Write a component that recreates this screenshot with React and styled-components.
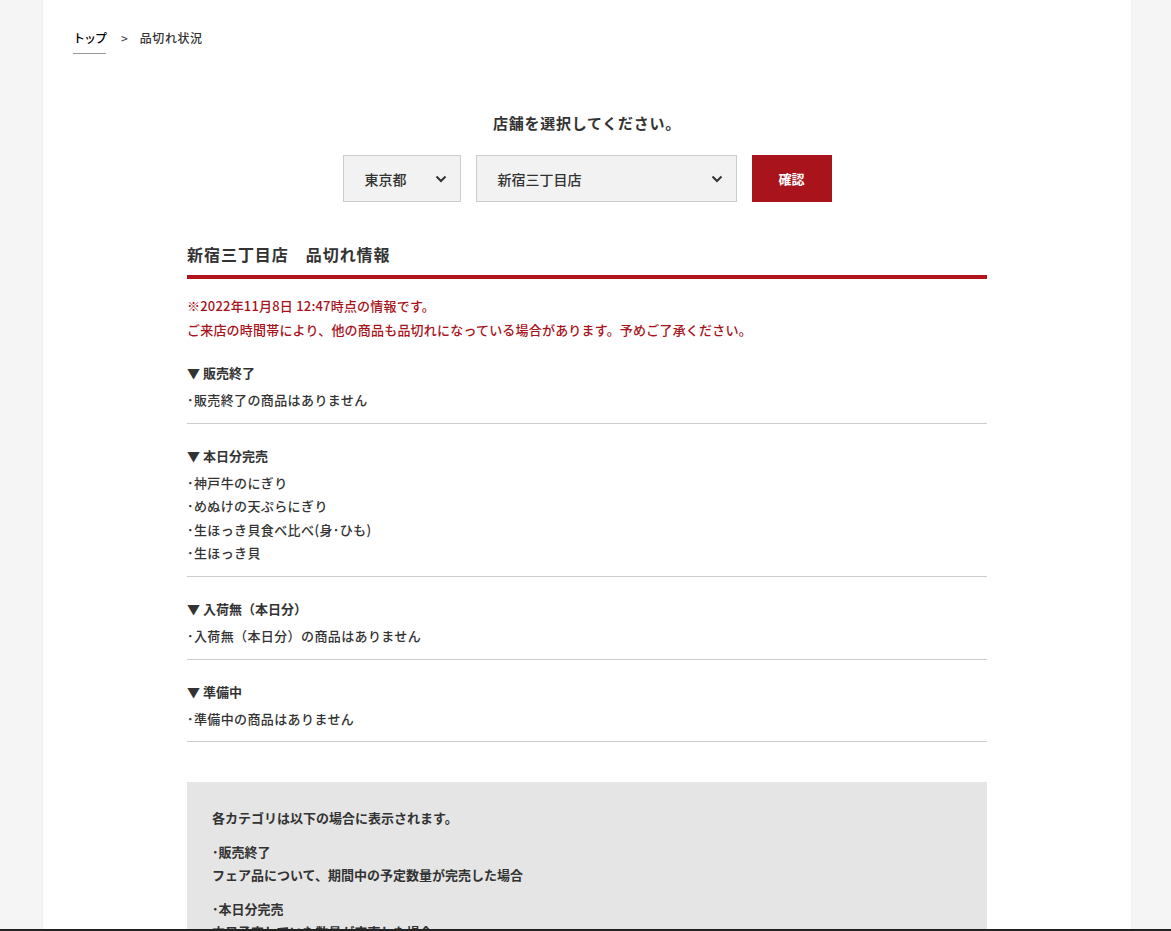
import React from 'react';
import styled, { createGlobalStyle } from 'styled-components';

const GlobalStyle = createGlobalStyle`
    html, body {
        margin: 0;
        padding: 0;
        background: #f5f5f5;
        font-family: "Noto Sans CJK JP", "Noto Sans", sans-serif;
        color: #333;
    }
    * { box-sizing: border-box; }
`;

const Page = styled.div`
    padding: 0 40px 0 43px;
`;

const Container = styled.div`
    background: #fff;
    min-height: 1200px;
    padding: 28px 30px 80px;
    box-shadow: 0 0 3px rgba(0,0,0,0.06);
`;

const Breadcrumb = styled.nav`
    display: flex;
    align-items: flex-start;
    font-size: 12px;
    line-height: 20px;
`;

const Crumb = styled.a`
    color: ${p => (p.$current ? '#333' : '#000')};
    font-weight: 500;
    letter-spacing: ${p => (p.$current ? '0.05em' : '-1px')};
    text-decoration: none;
    padding-bottom: 5px;
    border-bottom: ${p => (p.$current ? 'none' : '1px solid #999')};
`;

const Sep = styled.span`
    margin: 0 12px 0 15px;
    color: #333;
`;

const Inner = styled.div`
    width: 800px;
    margin: 0 auto;
`;

const SelectTitle = styled.h2`
    margin: 57px 0 20px;
    text-align: center;
    font-size: 15px;
    line-height: 24px;
    letter-spacing: 0.05em;
    font-weight: 700;
    color: #333;
`;

const SelectRow = styled.div`
    display: flex;
    justify-content: center;
    gap: 15px;
`;

const SelectBox = styled.div`
    width: ${p => p.$w}px;
    height: 47px;
    display: flex;
    align-items: center;
    justify-content: space-between;
    padding: 0 13px 0 21px;
    background: #f2f2f2;
    border: 1px solid #ccc;
    font-size: 14px;
    font-weight: 500;
    color: #333;
`;

const Button = styled.button`
    width: 80px;
    height: 47px;
    border: none;
    background: #a9141c;
    color: #fff;
    font-family: inherit;
    font-size: 13px;
    font-weight: 700;
`;

const StoreTitle = styled.h3`
    margin: 40px 0 0;
    padding-bottom: 9px;
    border-bottom: 4px solid #b0141c;
    font-size: 16px;
    line-height: 24px;
    letter-spacing: 0.06em;
    font-weight: 700;
    color: #333;
`;

const Notice = styled.p`
    margin: 15px 0 -1px;
    font-size: 13px;
    line-height: 24px;
    letter-spacing: 0.2px;
    font-weight: 500;
    color: #a8121b;
`;

const Section = styled.section`
    padding: 20px 0 11px;
    border-bottom: 1px solid #ccc;
`;

const SectionHead = styled.h4`
    margin: 0 0 3px;
    font-size: 13px;
    line-height: 24px;
    font-weight: 700;
    color: #333;
`;

const Items = styled.ul`
    margin: 0;
    padding: 0;
    list-style: none;
`;

const Item = styled.li`
    font-size: 13px;
    line-height: 23.6px;
    letter-spacing: 0.03em;
    font-weight: 500;
    color: #333;
`;

const InfoBox = styled.div`
    margin-top: 40px;
    background: #e5e5e5;
    padding: 24px 25px 30px;
`;

const InfoText = styled.p`
    margin: ${p => (p.$first ? '0' : '11px')} 0 0;
    font-size: 13px;
    line-height: 23px;
    font-weight: 700;
    color: #333;
`;

const BottomBar = styled.div`
    position: fixed;
    left: 0;
    right: 0;
    bottom: 0;
    height: 2px;
    background: #222;
`;

const Chevron = () => (
    <svg width="12" height="8" viewBox="0 0 12 8">
        <polyline points="1.5,1.5 6,6 10.5,1.5" fill="none" stroke="#333" strokeWidth="2" />
    </svg>
);

const sections = [
    { head: '販売終了', items: ['販売終了の商品はありません'] },
    { head: '本日分完売', items: ['神戸牛のにぎり', 'めぬけの天ぷらにぎり', '生ほっき貝食べ比べ(身･ひも)', '生ほっき貝'] },
    { head: '入荷無（本日分）', items: ['入荷無（本日分）の商品はありません'] },
    { head: '準備中', items: ['準備中の商品はありません'] },
];

const info = [
    ['各カテゴリは以下の場合に表示されます。'],
    ['･販売終了', 'フェア品について、期間中の予定数量が完売した場合'],
    ['･本日分完売', '本日予定していた数量が完売した場合'],
    ['･入荷無（本日分）', '天候等の理由により本日入荷がなかった場合'],
    ['･準備中', '仕込み中など、現在準備中の場合'],
];

const App = () => (
    <>
        <GlobalStyle />
        <Page>
            <Container>
                <Breadcrumb>
                    <Crumb href="#">トップ</Crumb>
                    <Sep>&gt;</Sep>
                    <Crumb $current>品切れ状況</Crumb>
                </Breadcrumb>
                <Inner>
                    <SelectTitle>店舗を選択してください。</SelectTitle>
                    <SelectRow>
                        <SelectBox $w={118}>東京都<Chevron /></SelectBox>
                        <SelectBox $w={261}>新宿三丁目店<Chevron /></SelectBox>
                        <Button>確認</Button>
                    </SelectRow>
                    <StoreTitle>新宿三丁目店　品切れ情報</StoreTitle>
                    <Notice>
                        ※2022年11月8日 12:47時点の情報です。<br />
                        ご来店の時間帯により、他の商品も品切れになっている場合があります。予めご了承ください。
                    </Notice>
                    {sections.map(s => (
                        <Section key={s.head}>
                            <SectionHead>▼ {s.head}</SectionHead>
                            <Items>
                                {s.items.map(i => <Item key={i}>･{i}</Item>)}
                            </Items>
                        </Section>
                    ))}
                    <InfoBox>
                        {info.map((lines, idx) => (
                            <InfoText key={idx} $first={idx === 0}>
                                {lines.map((l, j) => (
                                    <React.Fragment key={j}>{j > 0 && <br />}{l}</React.Fragment>
                                ))}
                            </InfoText>
                        ))}
                    </InfoBox>
                </Inner>
            </Container>
        </Page>
        <BottomBar />
    </>
);

export default App;
